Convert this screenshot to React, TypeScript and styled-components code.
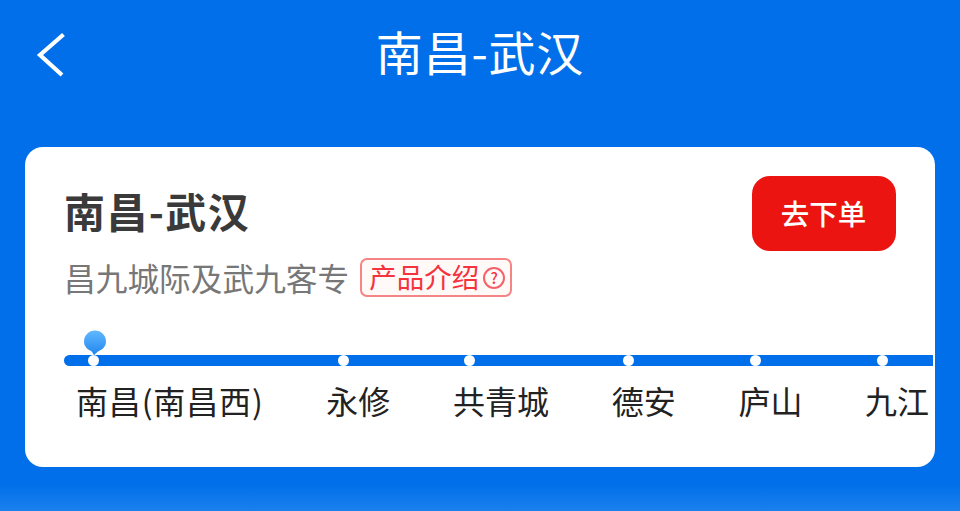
import React from 'react';
import styled, { createGlobalStyle } from 'styled-components';

const GlobalStyle = createGlobalStyle`
  html, body {
    margin: 0;
    padding: 0;
    background: #006fe9;
    font-family: "Noto Sans CJK SC", "Noto Sans", sans-serif;
  }
`;

const Page = styled.div`
  width: 960px;
  height: 511px;
  overflow: hidden;
  box-sizing: border-box;
  padding: 0 25px;
  background: linear-gradient(to bottom, #006fe9 0, #006fe9 484px, #1b80ed 511px);
`;

const Header = styled.header`
  display: grid;
  grid-template-columns: 1fr auto 1fr;
  align-items: center;
  height: 108px;
  margin: 0 0 39px;
`;

const BackButton = styled.button`
  display: flex;
  width: 40px;
  height: 50px;
  margin: 0 0 0 10px;
  padding: 0;
  border: 0;
  background: none;
`;

const PageTitle = styled.h1`
  margin: 0 0 6px;
  color: #fff;
  font-size: 47px;
  font-weight: 400;
  line-height: 60px;
  letter-spacing: 0.8px;
`;

const Card = styled.section`
  box-sizing: border-box;
  width: 910px;
  height: 320px;
  padding: 29px 2px 0 39px;
  background: #fff;
  border-radius: 18px;
`;

const CardTop = styled.div`
  display: flex;
  justify-content: space-between;
  align-items: flex-start;
  padding-right: 37px;
`;

const CardTitle = styled.h2`
  margin: 0;
  color: #3a3a3a;
  font-size: 41px;
  font-weight: 700;
  line-height: 68px;
  letter-spacing: 1.4px;
`;

const OrderButton = styled.button`
  width: 144px;
  height: 75px;
  padding: 0 1px 2px 0;
  border: 0;
  border-radius: 18px;
  background: #ec1410;
  color: #fff;
  font-family: inherit;
  font-size: 28.5px;
  font-weight: 500;
`;

const Subtitle = styled.div`
  display: flex;
  align-items: center;
  gap: 11px;
  margin-top: 6px;
  height: 41px;
  color: #777;
  font-size: 31.7px;
  line-height: 39px;
`;

const Tag = styled.span`
  display: inline-flex;
  align-items: center;
  box-sizing: border-box;
  width: 152px;
  height: 39px;
  padding: 0 0 3px 7px;
  gap: 4px;
  border: 2px solid #f78484;
  border-radius: 7px;
  background: #fff9f8;
  color: #f5333d;
  font-size: 27.5px;
  line-height: 34px;
`;

const Help = styled.span`
  display: flex;
  align-items: center;
  justify-content: center;
  box-sizing: border-box;
  width: 22px;
  height: 22px;
  margin-top: 3px;
  border: 2px solid #f5616a;
  border-radius: 50%;
  font-size: 15px;
  font-weight: 500;
  line-height: 1;
`;

const RouteWrap = styled.div`
  position: relative;
  margin-top: 57px;
`;

const Route = styled.div`
  position: relative;
  display: flex;
  gap: 62.7px;
  padding-left: 12px;
  overflow: hidden;
  height: 90px;
`;

const Track = styled.div`
  position: absolute;
  top: 0;
  left: 0;
  right: 0;
  height: 11px;
  background: #006fe9;
  border-radius: 6px 0 0 6px;
`;

const Marker = styled.svg`
  position: absolute;
  top: -25px;
  left: 19px;
  z-index: 2;
`;

const Station = styled.div`
  position: relative;
  flex: none;
`;

const Dot = styled.i`
  display: block;
  width: 11px;
  height: 11px;
  margin-left: 11.5px;
  border-radius: 50%;
  background: #fff;
`;

const StationName = styled.div<{ $spacing: number }>`
  margin-top: 13px;
  color: #222;
  font-size: 32px;
  line-height: 42px;
  letter-spacing: ${(p) => p.$spacing}px;
  white-space: nowrap;
`;

const stations = [
  { name: '南昌(南昌西)', spacing: 0.85 },
  { name: '永修', spacing: 0 },
  { name: '共青城', spacing: 0 },
  { name: '德安', spacing: 0 },
  { name: '庐山', spacing: 0 },
  { name: '九江', spacing: 0 },
];

export default function App() {
  return (
    <>
      <GlobalStyle />
      <Page>
        <Header>
          <BackButton aria-label="返回">
            <svg width="40" height="50" viewBox="0 0 40 50" fill="none">
              <path d="M28.5 5.5 L5 26 L27 46" stroke="#fff" strokeWidth="4.2" />
            </svg>
          </BackButton>
          <PageTitle>南昌-武汉</PageTitle>
        </Header>
        <Card>
          <CardTop>
            <CardTitle>南昌-武汉</CardTitle>
            <OrderButton>去下单</OrderButton>
          </CardTop>
          <Subtitle>
            昌九城际及武九客专
            <Tag>
              产品介绍
              <Help>?</Help>
            </Tag>
          </Subtitle>
          <RouteWrap>
            <Marker width="24" height="26" viewBox="0 0 24 26">
              <defs>
                <linearGradient id="pin" x1="0" y1="0" x2="0" y2="1">
                  <stop offset="0" stopColor="#62b8ff" />
                  <stop offset="1" stopColor="#1f86ec" />
                </linearGradient>
              </defs>
              <path
                d="M12 0.5 A11 11 0 0 1 23 11.5 C23 16.5 19.5 19.5 16 21 C14 22 12.5 23.5 11 25.5 C10 23.5 9.5 22 8 21 C4.5 19.5 1 16.5 1 11.5 A11 11 0 0 1 12 0.5 Z"
                fill="url(#pin)"
              />
            </Marker>
            <Route>
              <Track />
              {stations.map((s) => (
                <Station key={s.name}>
                  <Dot />
                  <StationName $spacing={s.spacing}>{s.name}</StationName>
                </Station>
              ))}
            </Route>
          </RouteWrap>
        </Card>
      </Page>
    </>
  );
}
